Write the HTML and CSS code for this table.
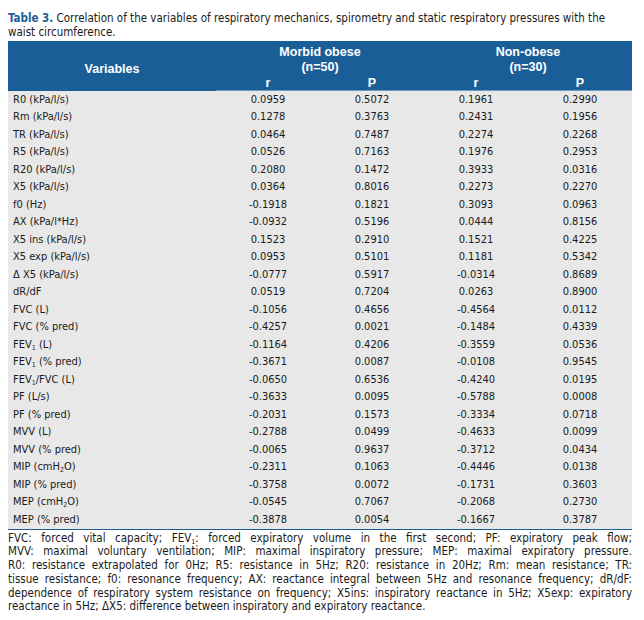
FILE: index.html
```html
<!DOCTYPE html>
<html>
<head>
<meta charset="utf-8">
<link rel="stylesheet" href="styles.css">
</head>
<body>
<div class="page">
<p class="caption"><span class="label">Table 3.</span> Correlation of the variables of respiratory mechanics, spirometry and static respiratory pressures with the waist circumference.</p>
<table class="data">
<thead>
<tr class="h1"><th rowspan="2" class="var">Variables</th><th colspan="2">Morbid obese<br>(n=50)</th><th colspan="2">Non-obese<br>(n=30)</th></tr>
<tr class="h2"><th>r</th><th>P</th><th>r</th><th>P</th></tr>
</thead>
<tbody>
<tr><td>R0 (kPa/l/s)</td><td>0.0959</td><td>0.5072</td><td>0.1961</td><td>0.2990</td></tr>
<tr><td>Rm (kPa/l/s)</td><td>0.1278</td><td>0.3763</td><td>0.2431</td><td>0.1956</td></tr>
<tr><td>TR (kPa/l/s)</td><td>0.0464</td><td>0.7487</td><td>0.2274</td><td>0.2268</td></tr>
<tr><td>R5 (kPa/l/s)</td><td>0.0526</td><td>0.7163</td><td>0.1976</td><td>0.2953</td></tr>
<tr><td>R20 (kPa/l/s)</td><td>0.2080</td><td>0.1472</td><td>0.3933</td><td>0.0316</td></tr>
<tr><td>X5 (kPa/l/s)</td><td>0.0364</td><td>0.8016</td><td>0.2273</td><td>0.2270</td></tr>
<tr><td>f0 (Hz)</td><td>-0.1918</td><td>0.1821</td><td>0.3093</td><td>0.0963</td></tr>
<tr><td>AX (kPa/l*Hz)</td><td>-0.0932</td><td>0.5196</td><td>0.0444</td><td>0.8156</td></tr>
<tr><td>X5 ins (kPa/l/s)</td><td>0.1523</td><td>0.2910</td><td>0.1521</td><td>0.4225</td></tr>
<tr><td>X5 exp (kPa/l/s)</td><td>0.0953</td><td>0.5101</td><td>0.1181</td><td>0.5342</td></tr>
<tr><td>Δ X5 (kPa/l/s)</td><td>-0.0777</td><td>0.5917</td><td>-0.0314</td><td>0.8689</td></tr>
<tr><td>dR/dF</td><td>0.0519</td><td>0.7204</td><td>0.0263</td><td>0.8900</td></tr>
<tr><td>FVC (L)</td><td>-0.1056</td><td>0.4656</td><td>-0.4564</td><td>0.0112</td></tr>
<tr><td>FVC (% pred)</td><td>-0.4257</td><td>0.0021</td><td>-0.1484</td><td>0.4339</td></tr>
<tr><td>FEV<sub>1</sub> (L)</td><td>-0.1164</td><td>0.4206</td><td>-0.3559</td><td>0.0536</td></tr>
<tr><td>FEV<sub>1</sub> (% pred)</td><td>-0.3671</td><td>0.0087</td><td>-0.0108</td><td>0.9545</td></tr>
<tr><td>FEV<sub>1</sub>/FVC (L)</td><td>-0.0650</td><td>0.6536</td><td>-0.4240</td><td>0.0195</td></tr>
<tr><td>PF (L/s)</td><td>-0.3633</td><td>0.0095</td><td>-0.5788</td><td>0.0008</td></tr>
<tr><td>PF (% pred)</td><td>-0.2031</td><td>0.1573</td><td>-0.3334</td><td>0.0718</td></tr>
<tr><td>MVV (L)</td><td>-0.2788</td><td>0.0499</td><td>-0.4633</td><td>0.0099</td></tr>
<tr><td>MVV (% pred)</td><td>-0.0065</td><td>0.9637</td><td>-0.3712</td><td>0.0434</td></tr>
<tr><td>MIP (cmH<sub>2</sub>O)</td><td>-0.2311</td><td>0.1063</td><td>-0.4446</td><td>0.0138</td></tr>
<tr><td>MIP (% pred)</td><td>-0.3758</td><td>0.0072</td><td>-0.1731</td><td>0.3603</td></tr>
<tr><td>MEP (cmH<sub>2</sub>O)</td><td>-0.0545</td><td>0.7067</td><td>-0.2068</td><td>0.2730</td></tr>
<tr><td>MEP (% pred)</td><td>-0.3878</td><td>0.0054</td><td>-0.1667</td><td>0.3787</td></tr>
</tbody>
</table>
<p class="notes"><span class="ln">FVC: forced vital capacity; FEV<sub>1</sub>: forced expiratory volume in the first second; PF: expiratory peak flow;</span>
<span class="ln">MVV: maximal voluntary ventilation; MIP: maximal inspiratory pressure; MEP: maximal expiratory pressure.</span>
<span class="ln">R0: resistance extrapolated for 0Hz; R5: resistance in 5Hz; R20: resistance in 20Hz; Rm: mean resistance; TR:</span>
<span class="ln">tissue resistance; f0: resonance frequency; AX: reactance integral between 5Hz and resonance frequency; dR/dF:</span>
<span class="ln">dependence of respiratory system resistance on frequency; X5ins: inspiratory reactance in 5Hz; X5exp: expiratory</span>
<span class="ln last">reactance in 5Hz; ΔX5: difference between inspiratory and expiratory reactance.</span></p>
</div>
</body>
</html>
```

FILE: styles.css
```css
html, body {
  margin: 0;
  padding: 0;
  background: #ffffff;
}
.page {
  width: 624px;
  padding: 0 12px 0 8px;
  font-family: "DejaVu Sans Condensed", "DejaVu Sans", sans-serif;
  color: #1a1a1a;
}
.caption {
  margin: 0;
  padding-top: 11px;
  font-size: 11.5px;
  line-height: 14px;
}
.label {
  color: #1b5e95;
  font-weight: bold;
}
.data {
  width: 624px;
  margin-top: 2px;
  border-collapse: collapse;
  table-layout: fixed;
  font-size: 11px;
  border-bottom: 1px solid #1b5e95;
}
.data th {
  background: #1a5e97;
  color: #ffffff;
  font-family: "Liberation Sans", Arial, sans-serif;
  font-size: 12.5px;
  font-weight: bold;
  text-align: center;
  padding: 0;
  width: 20%;
}
.h1 th {
  height: 34px;
  line-height: 15px;
  padding-top: 2px;
  vertical-align: middle;
}
.h1 th.var {
  vertical-align: middle;
  padding-top: 8px;
}
.h2 th {
  height: 13px;
  line-height: 13px;
  border-bottom: 1px solid #6d9bc3;
}
.data td {
  background: #e8e8e8;
  height: 17.5px;
  padding: 0;
  line-height: 14px;
  text-align: center;
  white-space: nowrap;
}
.data td:first-child {
  text-align: left;
  padding-left: 5px;
}
sub {
  font-size: 7px;
  line-height: 0;
  vertical-align: -2px;
}
.notes {
  margin: 2px 0 0;
  font-size: 11.5px;
  line-height: 13.8px;
}
.ln {
  display: block;
  white-space: nowrap;
  text-align: justify;
  text-align-last: justify;
}
.ln.last {
  text-align-last: left;
}
```
